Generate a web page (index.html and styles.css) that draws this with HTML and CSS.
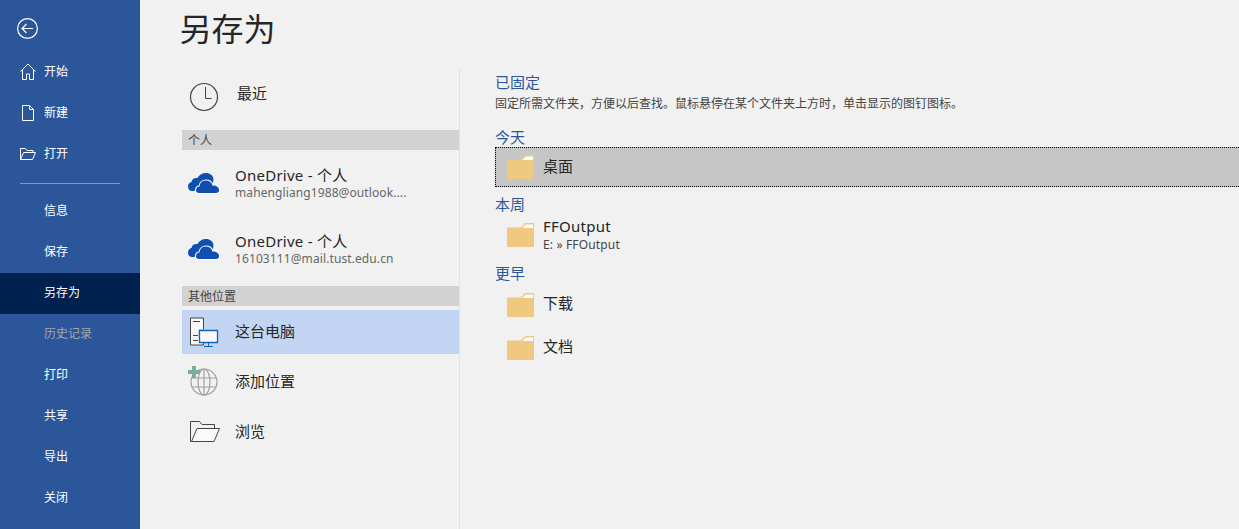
FILE: index.html
```html
<!DOCTYPE html>
<html lang="zh-CN">
<head>
<meta charset="utf-8">
<title>另存为</title>
<link rel="stylesheet" href="styles.css">
</head>
<body>
<div class="app">
  <nav class="nav">
    <div class="back">
      <svg width="21" height="21" viewBox="0 0 21 21" fill="none" stroke="#fff" stroke-width="1.200"><circle cx="10.500" cy="10.500" r="9.900"/><path d="M16 10.500H5M9.500 6L5 10.500L9.500 15"/></svg>
    </div>
    <div class="nav-item"><svg class="nav-icon" width="16" height="17" viewBox="0 0 16 17" fill="none" stroke="#fff"><path d="M.5 8.500L8 1l7.500 7.500M2.500 7v9.500h4V11h3v5.500h4V7"/></svg>开始</div>
    <div class="nav-item"><svg class="nav-icon" width="16" height="17" viewBox="0 0 16 17" fill="none" stroke="#fff"><path d="M2.500 1.500h7l4 4v11h-11zM9.500 1.500v4h4"/></svg>新建</div>
    <div class="nav-item"><svg class="nav-icon" width="16" height="14" viewBox="0 0 16 14" fill="none" stroke="#fff"><path d="M.5 12.500V1.500h5l1.500 2h6v2M.5 12.500h12l3-7H3.500z"/></svg>打开</div>
    <div class="nav-rule"></div>
    <div class="nav-item plain">信息</div>
    <div class="nav-item plain">保存</div>
    <div class="nav-item plain active">另存为</div>
    <div class="nav-item plain muted">历史记录</div>
    <div class="nav-item plain">打印</div>
    <div class="nav-item plain">共享</div>
    <div class="nav-item plain">导出</div>
    <div class="nav-item plain">关闭</div>
  </nav>
  <main class="main">
    <h1 class="title">另存为</h1>
    <div class="panes">
      <section class="places">
        <div class="place recent">
          <svg class="place-icon" width="30" height="30" viewBox="0 0 30 30" fill="none" stroke="#444"><circle cx="15" cy="15" r="13.500" stroke-width="1.200"/><path d="M16.500 5v11.500h6" stroke-width="1"/></svg>
          <span class="place-name name-recent">最近</span>
        </div>
        <div class="group">个人</div>
        <div class="place account">
          <svg class="place-icon" width="32" height="21" viewBox="0 0 32 21"><use href="#cloud"/></svg>
          <div class="place-text"><div class="place-name spaced">OneDrive - 个人</div><div class="place-sub">mahengliang1988@outlook....</div></div>
        </div>
        <div class="place account">
          <svg class="place-icon" width="32" height="21" viewBox="0 0 32 21"><use href="#cloud"/></svg>
          <div class="place-text"><div class="place-name spaced">OneDrive - 个人</div><div class="place-sub">16103111@mail.tust.edu.cn</div></div>
        </div>
        <div class="group">其他位置</div>
        <div class="place selected">
          <svg class="place-icon" width="30" height="30" viewBox="0 0 30 30" fill="none">
            <path d="M1.500 1h13v27h-13z" fill="#fafafa" stroke="#444"/>
            <path d="M4 4.500h7M4 18.500h5M4 23.500h5" stroke="#444"/>
            <path d="M9.500 12h5v9h-5z" fill="#c1d4f2"/>
            <path d="M10.500 13.500h18v12h-18z" fill="#fafafa" stroke="#0f67b8" stroke-width="1.300"/>
            <path d="M19.500 26v3M15 29.500h9" stroke="#0f67b8"/>
          </svg>
          <span class="place-name">这台电脑</span>
        </div>
        <div class="place plain-place">
          <svg class="place-icon" width="30" height="30" viewBox="0 0 30 30" fill="none" stroke="#a0a0a0" stroke-width="1.200">
            <circle cx="16" cy="16" r="13"/>
            <ellipse cx="16" cy="16" rx="6" ry="13"/>
            <path d="M3.500 12h25M3.500 21h25M16 3v26"/>
            <path d="M4 0h4v4h4v4H8v4H4V8H0V4h4z" fill="#7dab9c" stroke="none"/>
          </svg>
          <span class="place-name">添加位置</span>
        </div>
        <div class="place plain-place browse">
          <svg class="place-icon" width="30" height="21" viewBox="0 0 30 21" fill="none" stroke="#444"><path d="M7 7.500h22.500l-5.500 13H1.500z" fill="#fafafa"/><path d="M.5 20.500V.5h9l2.500 3h12.500v4"/><path d="M.5 20.500h23.500"/></svg>
          <span class="place-name">浏览</span>
        </div>
      </section>
      <section class="folders">
        <h2 class="folder-head pinned">已固定</h2>
        <p class="hint">固定所需文件夹，方便以后查找。鼠标悬停在某个文件夹上方时，单击显示的图钉图标。</p>
        <h2 class="folder-head today">今天</h2>
        <div class="folder focused"><svg class="folder-icon" width="27" height="24" viewBox="0 0 27 24"><use href="#folder"/></svg><span class="place-name">桌面</span></div>
        <h2 class="folder-head later">本周</h2>
        <div class="folder tall"><svg class="folder-icon" width="27" height="24" viewBox="0 0 27 24"><use href="#folder"/></svg><div class="place-text"><div class="place-name spaced">FFOutput</div><div class="folder-path">E: » FFOutput</div></div></div>
        <h2 class="folder-head later">更早</h2>
        <div class="folder roomy"><svg class="folder-icon" width="27" height="24" viewBox="0 0 27 24"><use href="#folder"/></svg><span class="place-name">下载</span></div>
        <div class="folder roomy"><svg class="folder-icon" width="27" height="24" viewBox="0 0 27 24"><use href="#folder"/></svg><span class="place-name">文档</span></div>
      </section>
    </div>
  </main>
</div>
<svg class="defs" width="0" height="0" aria-hidden="true">
  <defs>
    <g id="cloud">
      <path d="M6 18H4C1.500 18 0 16 0 13.500 0 11 1.500 9.500 3.500 9 4 6 6.500 4.500 9.500 5 11 2 14 0 18 0c4 0 7 2.500 7.500 6L25 10 10 18z" fill="#0f4fb0"/>
      <path d="M11 20.500C8.500 20.500 7 19 7.500 16.500 8 14 9.500 13 11 13 11.500 9.500 14.500 7 18 7c3.500 0 6 2 7 5 3.500-.5 6.700 2 6.700 5 0 2.500-1.700 3.500-3.700 3.500z" fill="#0f4fb0" stroke="#fff" stroke-width="1.200"/>
    </g>
    <g id="folder">
      <path d="M0 4.500h14L18 0h9v24H0z" fill="#efc97f"/>
      <path d="M15.500 5l3.200-3.600H26V5z" fill="#fff"/>
    </g>
  </defs>
</svg>
</body>
</html>
```
FILE: styles.css
```css
* { box-sizing: border-box; }
html, body { margin: 0; height: 100%; overflow: hidden; }
body {
  background: #f1f1f1;
  color: #262626;
  font-family: "Noto Sans", "Noto Sans CJK SC", sans-serif;
}
.app { display: flex; height: 529px; }
.defs { position: absolute; }

.nav { width: 140px; flex: none; background: #2b579a; color: #fff; font-size: 12px; }
.back { height: 51px; padding: 18px 0 0 17px; }
.back svg { display: block; }
.nav-item { display: flex; align-items: center; height: 41px; padding-left: 20px; line-height: 41px; }
.nav-icon { flex: none; margin-right: 8px; }
.nav-item.plain { padding: 0 0 1px 44px; line-height: 40px; }
.nav-item.active { background: #002050; }
.nav-item.muted { color: #a0a6ae; }
.nav-rule { height: 1px; margin: 9px 20px 7px; background: #7b9bcb; }

.main { flex: 1; min-width: 0; }
.title { height: 68px; margin: 0; padding-left: 39.500px; font-size: 32px; font-weight: 400; line-height: 58px; color: #262626; }
.panes { display: flex; height: 461px; padding-left: 42px; }
.places { width: 278px; flex: none; border-right: 1px solid #e1e1e1; }
.folders { flex: 1; min-width: 0; padding: 4px 0 0 35px; }

.group { height: 20px; padding-left: 6px; background: #d2d2d2; font-size: 12px; line-height: 22px; color: #444; }
.place { display: flex; align-items: center; }
.place-icon { flex: none; }
.recent { height: 62px; padding: 0 0 5px 7px; }
.recent .place-icon { margin-right: 18px; }
.name-recent { margin-bottom: 8px; }
.account { height: 66px; padding-left: 6px; }
.account .place-icon { margin-right: 15px; }
.account + .group { margin-top: 4px; }
.group + .selected { margin-top: 4px; }
.selected { height: 44px; padding-left: 7px; background: #c2d5f2; }
.selected .place-icon { margin-right: 16px; }
.selected .place-name { margin-bottom: 2px; }
.plain-place { height: 50px; padding-left: 6px; }
.plain-place .place-icon { margin-right: 17px; }
.selected + .plain-place { margin-top: 2px; }
.plain-place.browse { padding-left: 8px; }
.plain-place.browse .place-icon { margin-right: 15px; }
.place-name { font-size: 15px; line-height: 20px; color: #262626; }
.spaced { letter-spacing: .25px; }
.place-sub { font-size: 12px; line-height: 16px; color: #666; white-space: nowrap; letter-spacing: .1px; }

.folder-head { height: 20px; margin: 0; font-size: 15px; font-weight: 400; line-height: 20px; color: #2b579a; }
.hint { height: 20px; margin: 2px 0 0; font-size: 12px; line-height: 20px; color: #444; white-space: nowrap; }
.today { margin-top: 13px; }
.later { margin-top: 7px; }
.folder { display: flex; align-items: center; padding-left: 12px; }
.folder-icon { flex: none; margin-right: 9px; }
.folder .place-name { margin-bottom: 3px; }
.folder .place-text .place-name { margin-bottom: 0; }
.folder .place-text { margin-bottom: 1px; }
.focused { height: 40px; background: #c6c6c6; border: 1px dotted #000; border-right: 0; padding-left: 11px; }
.focused .place-name { margin-bottom: 2px; }
.tall { height: 42px; }
.roomy { height: 43px; }
.folder-path { font-size: 12px; line-height: 18px; color: #444; white-space: nowrap; letter-spacing: .15px; }
```
